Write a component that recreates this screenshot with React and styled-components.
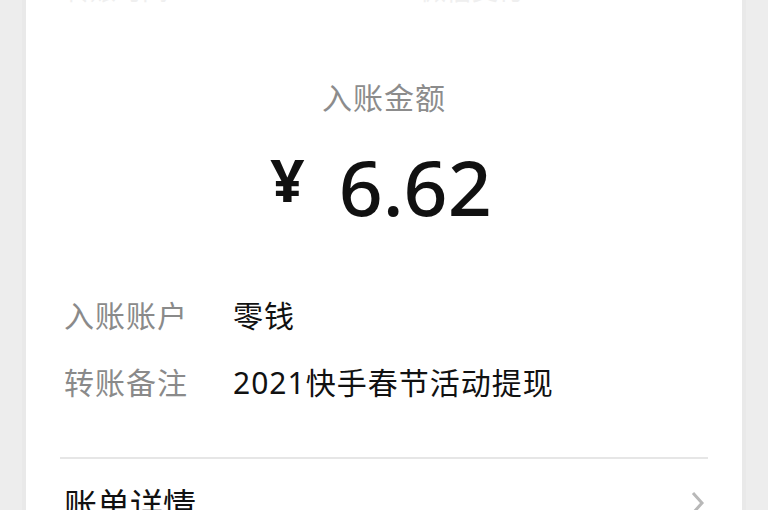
import React from "react";
import styled, { createGlobalStyle } from "styled-components";

const Global = createGlobalStyle`
  html, body { margin: 0; padding: 0; background: #ededed; }
  body { font-family: "Noto Sans", "Noto Sans CJK SC", sans-serif; }
`;

const Page = styled.div`
  width: 768px;
  height: 510px;
  overflow: hidden;
  background: #ededed;
  display: flex;
  padding-left: 26px;
  box-sizing: border-box;
`;

const Card = styled.div`
  width: 716px;
  height: 510px;
  background: #fff;
  box-shadow: 0 0 0 4px #e9e9e9;
  display: flex;
  flex-direction: column;
  overflow: hidden;
  & > * { flex-shrink: 0; }
`;

const TopGhost = styled.div`
  margin: -26px 0 0 38px;
  height: 30px;
  font-size: 26px;
  line-height: 30px;
  color: #efefef;
  font-family: "Noto Sans CJK SC", sans-serif;
  white-space: nowrap;
`;

const Title = styled.div`
  margin-top: 72px;
  text-align: center;
  font-size: 30px;
  line-height: 40px;
  color: #8c8c8c;
  font-family: "Noto Sans CJK SC", sans-serif;
  letter-spacing: 1px;
`;

const AmountRow = styled.div`
  margin-top: 30px;
  height: 80px;
  display: flex;
  justify-content: center;
  align-items: center;
  gap: 34px;
  padding-right: 6px;
  color: #111;
`;

const Yen = styled.span`
  font-family: "Noto Sans", sans-serif;
  font-weight: 700;
  font-size: 60px;
  line-height: 1;
  transform: translateY(-7px);
`;

const Amount = styled.span`
  font-family: "Noto Sans", sans-serif;
  font-weight: 500;
  font-size: 77px;
  line-height: 1;
`;

const Info = styled.div`
  margin-top: 70px;
  padding-left: 38px;
  display: flex;
  flex-direction: column;
  gap: 27px;
`;

const Row = styled.div`
  display: flex;
  align-items: center;
  height: 40px;
  font-family: "Noto Sans", "Noto Sans CJK SC", sans-serif;
  font-size: 30px;
  line-height: 40px;
`;

const Label = styled.span`
  width: 169px;
  color: #8a8a8a;
  letter-spacing: 1px;
`;

const Value = styled.span`
  color: #111;
  letter-spacing: 1px;
`;

const Divider = styled.div`
  margin: 54px 34px 0;
  height: 2px;
  background: #e6e6e6;
`;

const Detail = styled.div`
  margin-top: 19px;
  padding: 0 36px 0 38px;
  height: 50px;
  display: flex;
  align-items: center;
  justify-content: space-between;
  font-family: "Noto Sans CJK SC", sans-serif;
  font-size: 33px;
  color: #111;
`;

const Chevron = () => (
  <svg width="16" height="26" viewBox="0 0 16 26">
    <path d="M3 3 L12 13 L3 23" fill="none" stroke="#b8b8b8" strokeWidth="3" />
  </svg>
);

export default function App() {
  return (
    <>
      <Global />
      <Page>
        <Card>
          <TopGhost>转账时间 2021-02-18 12:00:00 微信支付</TopGhost>
          <Title>入账金额</Title>
          <AmountRow>
            <Yen>¥</Yen>
            <Amount>6.62</Amount>
          </AmountRow>
          <Info>
            <Row>
              <Label>入账账户</Label>
              <Value>零钱</Value>
            </Row>
            <Row>
              <Label>转账备注</Label>
              <Value>2021快手春节活动提现</Value>
            </Row>
          </Info>
          <Divider />
          <Detail>
            <span>账单详情</span>
            <Chevron />
          </Detail>
        </Card>
      </Page>
    </>
  );
}
